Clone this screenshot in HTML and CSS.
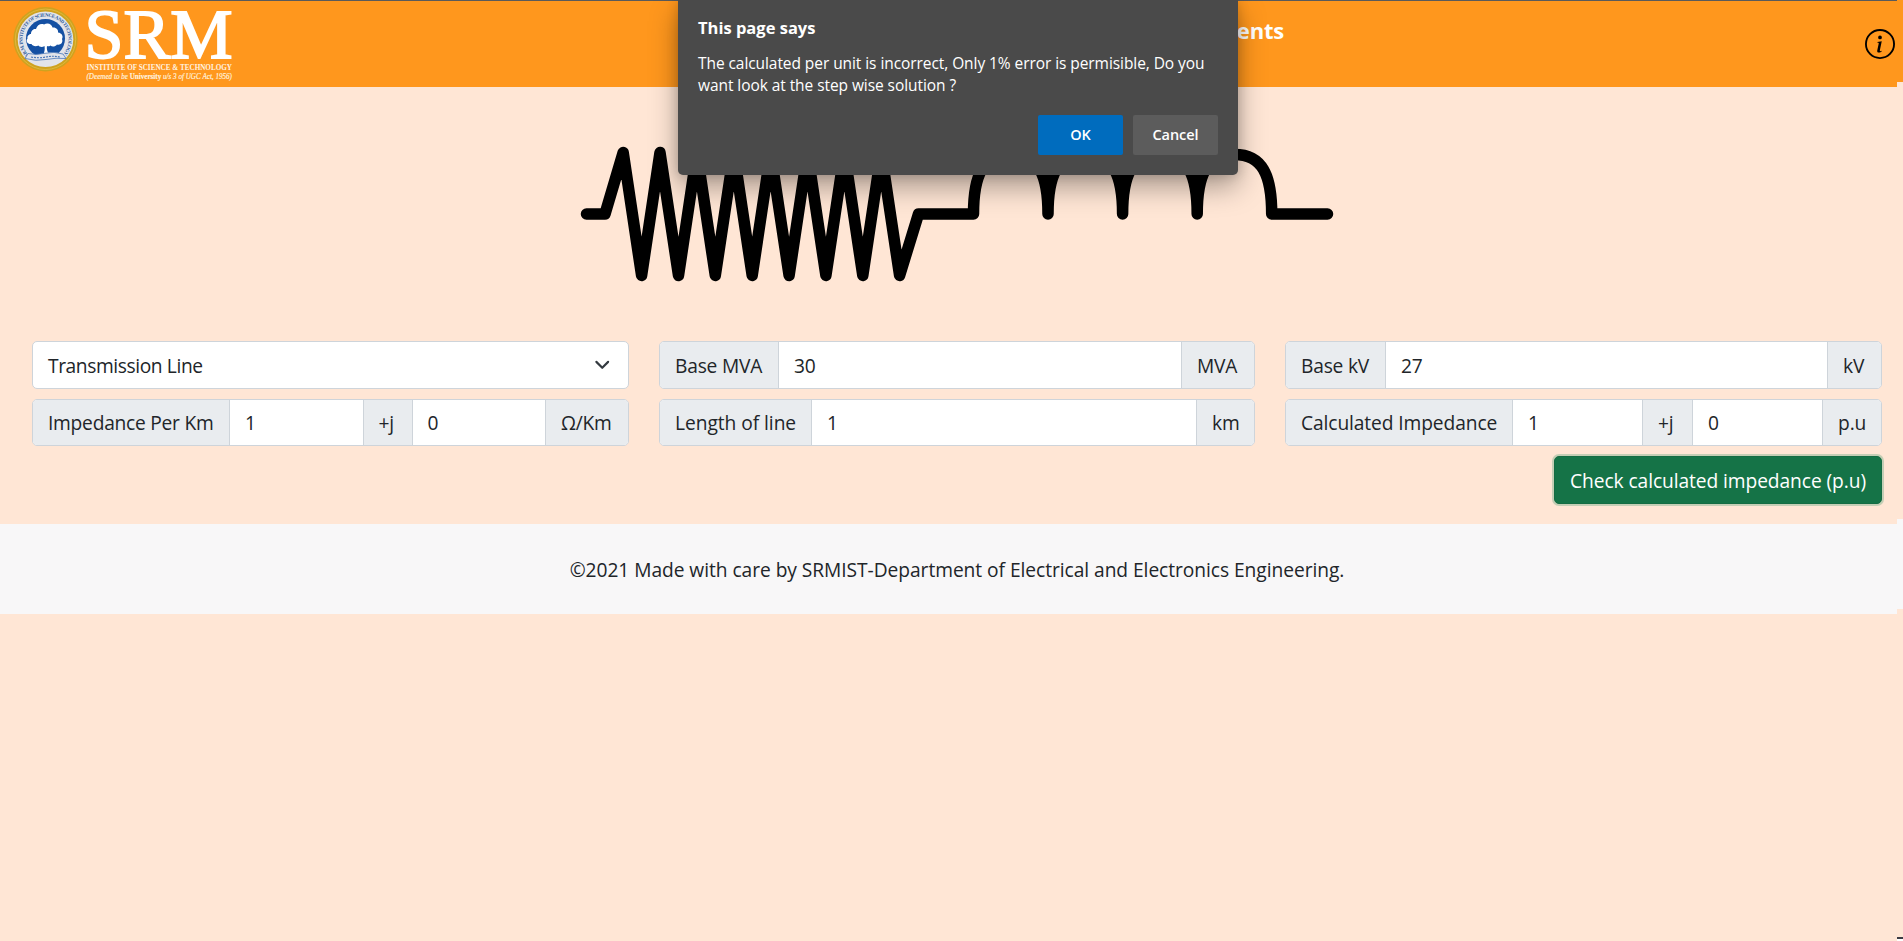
FILE: index.html
```html
<!DOCTYPE html>
<html lang="en">
<head>
<meta charset="utf-8">
<title>Per unit calculation</title>
<link rel="stylesheet" href="styles.css">
</head>
<body>
<header class="navbar">
  <svg class="logo" width="240" height="86" viewBox="0 1 240 86" role="img" aria-label="SRM">
    <defs>
      <path id="ring" d="M29 55.500A23 23 0 1 1 62 55.500"/>
    </defs>
    <circle cx="45.500" cy="39.300" r="32.200" fill="#cfa21f"/>
    <circle cx="45.500" cy="39.300" r="30.200" fill="none" stroke="#e3bd45" stroke-width=".8"/>
    <circle cx="45.500" cy="39.300" r="27.800" fill="#e2e4ea"/>
    <circle cx="45.500" cy="38.500" r="19.500" fill="#1450a3"/>
    <text class="ring-text"><textPath href="#ring" textLength="105">S.R.M. INSTITUTE OF SCIENCE AND TECHNOLOGY</textPath></text>
    <path fill="#fff" d="M43.500 54c1.200-3 1.500-5 1-8-2 1.500-5 1.200-6-.5-3 1.500-6 .5-7-1.500-4 .5-6-3-4-5.500-.5-3 2-4.500 3.500-4.500 0-4 3-5.500 5-5 1-4 5-6 8-4.500 4-2.500 8 0 8.500 3 3.500-.5 6 2 5.500 5 4 .5 5.500 4 4 6.500 1.500 4-2 6.500-5 5.500-2 2.500-5 2.500-6.500 1-1.500 1-2.500 1-3.500.5-.5 3 0 5 2 8z"/>
    <path fill="#e2e4ea" stroke="#4a77b8" stroke-width=".8" d="M28 53.500q8 2 17-.2t18 .7l3 4.500q-10-1-20 1t-21-1z"/>
    <path fill="none" stroke="#4a77b8" stroke-width="1.200" stroke-dasharray="2 1" d="M31 57q8 1.500 15 0t14 0"/>
    <text class="srm" x="84.500" y="57.500" textLength="148" lengthAdjust="spacingAndGlyphs">SRM</text>
    <text class="inst" x="86.500" y="69.800" textLength="145.500" lengthAdjust="spacingAndGlyphs">INSTITUTE OF SCIENCE &amp; TECHNOLOGY</text>
    <text class="deemed" x="86.500" y="79.300" textLength="145.500" lengthAdjust="spacingAndGlyphs">(Deemed to be <tspan class="uni">University</tspan> u/s 3 of UGC Act, 1956)</text>
  </svg>
  <h1 class="heading">Per Unit Calculation of Power System Components</h1>
  <svg class="info" width="30" height="30" viewBox="0 0 16 16"><path d="M8 15A7 7 0 1 1 8 1a7 7 0 0 1 0 14zm0 1A8 8 0 1 0 8 0a8 8 0 0 0 0 16z"/><path d="M8.930 6.588l-2.290.287-.082.380.450.083c.294.070.352.176.288.469l-.738 3.468c-.194.897.105 1.319.808 1.319.545 0 1.178-.252 1.465-.598l.088-.416c-.200.176-.492.246-.686.246-.275 0-.375-.193-.304-.533L8.930 6.588zM9 4.500a1 1 0 1 1-2 0 1 1 0 0 1 2 0z"/></svg>
</header>

<main>
  <div class="diagram">
    <svg width="764" height="160" viewBox="575 130 764 160"><path fill="none" stroke="#000" stroke-width="11.500" stroke-linecap="round" stroke-linejoin="round" d="M586.500 214H605L623.200 152.500L641.600 275.500L660 152.500L678.500 275.500L696.900 152.500L715.300 275.500L733.800 152.500L752.200 275.500L770.600 152.500L789.100 275.500L807.500 152.500L825.900 275.500L844.400 152.500L862.800 275.500L881.200 152.500L899.600 275.500L918.500 214H973.500C973.500 175 983 154.500 1010.800 154.500S1048 175 1048 214C1048 175 1057.500 154.500 1085.300 154.500S1122.600 175 1122.600 214C1122.600 175 1132 154.500 1160 154.500S1197.200 175 1197.200 214C1197.200 175 1206.700 154.500 1234.500 154.500S1271.700 175 1271.700 214H1327.500"/></svg>
  </div>
  <form class="fields">
    <div class="group select"><span class="value">Transmission Line</span>
      <svg class="chevron" width="20" height="20" viewBox="0 0 16 16"><path fill="none" stroke="#343a40" stroke-linecap="round" stroke-linejoin="round" stroke-width="1.700" d="M3.500 5.500l4.700 4.700 4.700-4.700"/></svg></div>
    <div class="group mva"><span class="label">Base MVA</span><span class="input">30</span><span class="label">MVA</span></div>
    <div class="group kv"><span class="label">Base kV</span><span class="input">27</span><span class="label">kV</span></div>
    <div class="group imp"><span class="label">Impedance Per Km</span><span class="input">1</span><span class="label">+j</span><span class="input">0</span><span class="label">Ω/Km</span></div>
    <div class="group len"><span class="label">Length of line</span><span class="input">1</span><span class="label">km</span></div>
    <div class="group calc"><span class="label">Calculated Impedance</span><span class="input">1</span><span class="label">+j</span><span class="input">0</span><span class="label">p.u</span></div>
    <button class="check" type="button">Check calculated impedance (p.u)</button>
  </form>
</main>

<footer class="footer">©2021 Made with care by SRMIST-Department of Electrical and Electronics Engineering.</footer>

<div class="edge"></div>

<div class="dialog">
  <h2 class="dialog-title">This page says</h2>
  <p class="dialog-text">The calculated per unit is incorrect, Only 1% error is permisible, Do you<br>want look at the step wise solution ?</p>
  <div class="dialog-actions">
    <button class="btn ok" type="button">OK</button>
    <button class="btn" type="button">Cancel</button>
  </div>
</div>
</body>
</html>
```
FILE: styles.css
```css
* { box-sizing: border-box; }
html, body { height: 100%; }
body {
  margin: 0;
  position: relative;
  overflow: hidden;
  background: #ffe6d5;
  color: #212529;
  font-family: "Open Sans", "Noto Sans", sans-serif;
  font-size: 19.2px;
  letter-spacing: -0.2px;
}
button { font: inherit; letter-spacing: inherit; border: 0; color: #fff; padding: 0; }

.navbar {
  display: flex;
  align-items: flex-start;
  height: 87px;
  border-top: 1px solid #5a5a5a;
  background: #ff971d;
}
.logo { flex: none; }
.ring-text { font: bold 5px "Liberation Serif", serif; letter-spacing: 0; fill: #2c5a9c; }
.srm { font: 70px "Liberation Serif", serif; letter-spacing: 0; fill: #fff; stroke: #fff; stroke-width: 1.8; }
.inst { font: bold 9px "Liberation Serif", serif; letter-spacing: 0; fill: #fff3e2; }
.deemed { font: italic 8.5px "Liberation Serif", serif; letter-spacing: 0; fill: #fff0dc; stroke: #fff0dc; stroke-width: .2; }
.uni { font-weight: bold; font-style: normal; }
.heading {
  flex: none;
  width: 1044px;
  margin: 12px 0 0;
  text-align: right;
  font-size: 22px;
  line-height: 34px;
  font-weight: 700;
  color: #fff;
}
.info { flex: none; margin: 28px 8px 0 auto; }

.diagram { display: flex; justify-content: center; height: 254px; padding: 43px 0 0 11px; }

.fields {
  display: grid;
  grid-template-columns: 597px 596px 597px;
  grid-template-rows: 48px 47px 48px;
  column-gap: 30px;
  row-gap: 10px;
  padding: 0 21px 0 32px;
  height: 183px;
}
.group {
  display: grid;
  border: 1px solid #ced4da;
  border-radius: 5px;
  background: #fff;
  overflow: hidden;
  line-height: 48px;
  white-space: nowrap;
}
.group > * { padding-left: 15px; }
.group > * + * { border-left: 1px solid #ced4da; }
.label { background: #e9ecef; }
.select { display: flex; align-items: center; justify-content: space-between; letter-spacing: -0.4px; }
.select .value { padding-top: 1px; }
.select .chevron { border: 0; padding: 0; margin-right: 16px; }
.mva { grid-template-columns: 118px 1fr 73px; }
.kv { grid-template-columns: 99px 1fr 54px; }
.imp { grid-template-columns: 196px 1fr 49px 1fr 83px; letter-spacing: -0.25px; line-height: 46px; }
.len { grid-template-columns: 151px 1fr 58px; letter-spacing: -0.05px; line-height: 46px; }
.calc { grid-template-columns: 226px 1fr 50px 1fr 59px; letter-spacing: -0.1px; line-height: 46px; }
.check {
  grid-column: 3;
  justify-self: end;
  width: 328px;
  height: 48px;
  border-radius: 5px;
  background: #157347;
  border: 1px solid #146c43;
  box-shadow: 0 0 0 2px rgba(60, 153, 110, .3);
  letter-spacing: -0.08px;
}

.footer {
  display: flex;
  align-items: center;
  justify-content: center;
  height: 90px;
  padding: 0 0 0 11px;
  background: #f8f7f8;
  letter-spacing: -0.05px;
}

/* Narrow strip of the scrolled page along the right side */
.edge {
  position: absolute;
  top: 0;
  right: 0;
  width: 6px;
  height: 941px;
  background: linear-gradient(#ff971d 82px, #ffe6d5 82px 519px, #f8f7f8 519px 609px, #ffe6d5 609px 937px, #3c3c44 937px 939px, #fff 939px);
}

.dialog {
  position: absolute;
  left: 678px;
  top: 0;
  width: 560px;
  height: 175px;
  padding: 17px 20px 20px;
  border-radius: 0 0 5px 5px;
  background: #4a4a4a;
  color: #fff;
  box-shadow: 0 12px 28px rgba(0, 0, 0, .34), 0 0 12px rgba(0, 0, 0, .16);
  font-size: 15.5px;
  letter-spacing: -0.07px;
}
.dialog-title { margin: 0; font-size: 16.5px; line-height: 22px; font-weight: 700; letter-spacing: 0; }
.dialog-text { margin: 13px 0 0; line-height: 22px; white-space: nowrap; }
.dialog-actions { display: flex; justify-content: flex-end; gap: 10px; margin-top: 19px; }
.btn { width: 85px; height: 40px; border-radius: 2px; background: #5c5c5c; font-size: 14.5px; font-weight: 600; padding-bottom: 2px; }
.ok { background: #006cbe; }
```
